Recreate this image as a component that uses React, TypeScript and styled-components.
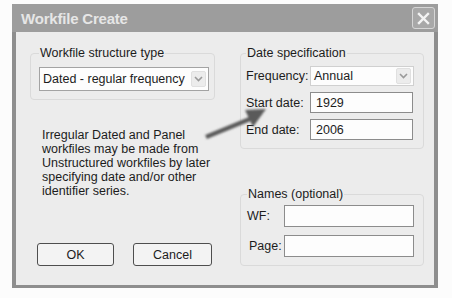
import styled, { createGlobalStyle } from "styled-components";

const GlobalStyle = createGlobalStyle`
    html, body {
        margin: 0;
        padding: 0;
        background: #fcfcfc;
    }
    body {
        font-family: "Liberation Sans", Arial, sans-serif;
        font-size: 12.5px;
        color: #1c1c1c;
    }
`

const Dialog = styled.div`
    position: relative;
    margin: 4px 0 0 12px;
    width: 426px;
    height: 284px;
    display: flex;
    flex-direction: column;
`

const TitleBar = styled.div`
    height: 28px;
    flex: none;
    display: flex;
    align-items: center;
    justify-content: space-between;
    padding: 0 3px 0 9px;
    background: #9d9d9d;
    box-sizing: border-box;
`

const Title = styled.span`
    font-weight: bold;
    font-size: 15px;
    color: #e6e6e6;
    letter-spacing: -0.2px;
`

const CloseButton = styled.div`
    width: 23px;
    height: 22px;
    box-sizing: border-box;
    border: 1px solid #d6d6d6;
    border-radius: 3px;
    background: #a8a8a8;
    display: flex;
    align-items: center;
    justify-content: center;
`

const Body = styled.div`
    flex: 1;
    display: grid;
    grid-template-columns: 185px 184px;
    column-gap: 25px;
    padding: 0 10px 19px 14px;
    background: #ececec;
    border: 4px solid #8e8e8e;
    border-top: none;
`

const Column = styled.div`
    display: flex;
    flex-direction: column;
`

const Group = styled.fieldset<{ $top: number; $left: number }>`
    margin: ${p => p.$top}px 0 0;
    padding: 0 4px 8px ${p => p.$left}px;
    border: 1px solid #dadada;
    border-radius: 4px;
    min-width: 0;
`

const Legend = styled.legend`
    padding: 0 1px;
    line-height: 14px;
    height: 14px;
`

const Select = styled.div<{ $width: number; $height: number; $border?: string; $top?: number }>`
    width: ${p => p.$width}px;
    height: ${p => p.$height}px;
    margin-top: ${p => p.$top ?? 0}px;
    box-sizing: border-box;
    border: 1px solid ${p => p.$border ?? "#a3a3a3"};
    background: #fdfdfd;
    display: flex;
    align-items: center;
    justify-content: space-between;
    padding: 0 2px 0 3px;
    white-space: nowrap;
`

const SelectArrow = styled.div`
    width: 15px;
    height: 16px;
    box-sizing: border-box;
    border: 1px solid #e0e0e0;
    border-radius: 2px;
    background: #ececec;
    display: flex;
    align-items: center;
    justify-content: center;
`

const Note = styled.p`
    margin: 28px 0 0 12px;
    line-height: 14px;
    white-space: nowrap;
`

const ButtonRow = styled.div`
    margin-top: auto;
    margin-left: 7px;
    display: flex;
    gap: 19px;
`

const Button = styled.div<{ $width: number }>`
    width: ${p => p.$width}px;
    height: 23px;
    box-sizing: border-box;
    border: 1px solid #4e4e4e;
    border-radius: 3px;
    background: #f3f3f3;
    display: flex;
    align-items: center;
    justify-content: center;
`

const FieldRow = styled.div<{ $gap: number }>`
    display: flex;
    align-items: center;
    margin-top: ${p => p.$gap}px;
`

const FieldLabel = styled.span<{ $width: number; $indent?: number }>`
    width: ${p => p.$width}px;
    flex: none;
    box-sizing: border-box;
    padding-left: ${p => p.$indent ?? 0}px;
`

const Input = styled.div<{ $width: number; $height: number }>`
    width: ${p => p.$width}px;
    height: ${p => p.$height}px;
    box-sizing: border-box;
    border: 1px solid #8c8c8c;
    background: #fdfdfd;
    display: flex;
    align-items: center;
    padding-left: 5px;
`

const Pointer = styled.svg`
    position: absolute;
    left: 176px;
    top: 98px;
    overflow: visible;
`

function Chevron() {
    return (
        <SelectArrow>
            <svg width="9" height="6" viewBox="0 0 9 6">
                <polyline points="1,1 4.5,4.5 8,1" fill="none" stroke="#9a9a9a" strokeWidth="1.6" />
            </svg>
        </SelectArrow>
    )
}

export default function App() {
    return (
        <>
            <GlobalStyle />
            <Dialog>
                <TitleBar>
                    <Title>Workfile Create</Title>
                    <CloseButton>
                        <svg width="13" height="13" viewBox="0 0 13 13">
                            <path d="M2 2 L11 11 M11 2 L2 11" stroke="#f4f4f4" strokeWidth="2.4" strokeLinecap="square" />
                        </svg>
                    </CloseButton>
                </TitleBar>
                <Body>
                    <Column>
                        <Group $top={14} $left={8}>
                            <Legend>Workfile structure type</Legend>
                            <Select $width={170} $height={24} $top={7}>
                                Dated - regular frequency
                                <Chevron />
                            </Select>
                        </Group>
                        <Note>
                            Irregular Dated and Panel<br />
                            workfiles may be made from<br />
                            Unstructured workfiles by later<br />
                            specifying date and/or other<br />
                            identifier series.
                        </Note>
                        <ButtonRow>
                            <Button $width={77}>OK</Button>
                            <Button $width={79}>Cancel</Button>
                        </ButtonRow>
                    </Column>
                    <Column>
                        <Group $top={14} $left={5}>
                            <Legend>Date specification</Legend>
                            <FieldRow $gap={6}>
                                <FieldLabel $width={64}>Frequency:</FieldLabel>
                                <Select $width={104} $height={20} $border="#d0d0d0">
                                    Annual
                                    <Chevron />
                                </Select>
                            </FieldRow>
                            <FieldRow $gap={6}>
                                <FieldLabel $width={64}>Start date:</FieldLabel>
                                <Input $width={103} $height={21}>1929</Input>
                            </FieldRow>
                            <FieldRow $gap={6}>
                                <FieldLabel $width={64}>End date:</FieldLabel>
                                <Input $width={103} $height={21}>2006</Input>
                            </FieldRow>
                        </Group>
                        <Group $top={38} $left={6}>
                            <Legend>Names (optional)</Legend>
                            <FieldRow $gap={4}>
                                <FieldLabel $width={37}>WF:</FieldLabel>
                                <Input $width={130} $height={22} />
                            </FieldRow>
                            <FieldRow $gap={8}>
                                <FieldLabel $width={37} $indent={2}>Page:</FieldLabel>
                                <Input $width={130} $height={22} />
                            </FieldRow>
                        </Group>
                    </Column>
                </Body>
                <Pointer width="80" height="40" viewBox="0 0 80 40">
                    <defs>
                        <filter id="soft" x="-20%" y="-50%" width="140%" height="200%">
                            <feGaussianBlur stdDeviation="1.1" />
                        </filter>
                    </defs>
                    <g filter="url(#soft)" fill="#5a5a5a" stroke="#5a5a5a">
                        <line x1="18" y1="35" x2="62" y2="17" strokeWidth="4.5" />
                        <polygon points="78,7 57,8 65,25" stroke="none" />
                    </g>
                </Pointer>
            </Dialog>
        </>
    )
}
